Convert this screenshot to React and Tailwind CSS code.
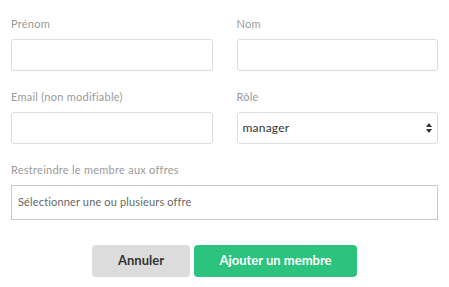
import React, { useState } from 'react';

const Field = ({ label, children }) => (
	<div className="flex flex-col">
		<label className="mb-[8px] text-[11px] leading-[14px] tracking-[0.25px] text-[#9a9a9a]">{label}</label>
		{children}
	</div>
);

const inputClass = 'h-[32px] w-full rounded-[3px] border border-[#dcdcdc] bg-white px-[10px] text-[12px] text-[#333] outline-none';

export default function App() {
	const [role, setRole] = useState('manager');

	return (
		<div className="min-h-screen bg-white px-[11px] pt-[17px]" style={{ fontFamily: 'Lato, "Open Sans", sans-serif' }}>
			<div className="grid grid-cols-2 gap-x-[24px] gap-y-[19px]">
				<Field label="Prénom">
					<input type="text" className={inputClass} />
				</Field>
				<Field label="Nom">
					<input type="text" className={inputClass} />
				</Field>
				<Field label="Email (non modifiable)">
					<input type="text" className={inputClass} />
				</Field>
				<Field label="Rôle">
					<div className="relative">
						<select
							value={role}
							onChange={(e) => setRole(e.target.value)}
							className={`${inputClass} appearance-none pl-[5px] tracking-[0.2px]`}
						>
							<option value="manager">manager</option>
							<option value="admin">admin</option>
						</select>
						<svg className="pointer-events-none absolute right-[6px] top-[11px]" width="6" height="10" viewBox="0 0 6 10">
							<path d="M3 0 L6 4 L0 4 Z" fill="#333" />
							<path d="M0 6 L6 6 L3 10 Z" fill="#333" />
						</svg>
					</div>
				</Field>
			</div>

			<div className="mt-[19px]">
				<Field label="Restreindre le membre aux offres">
					<div className="flex h-[35px] items-center border border-[#c9c9c9] px-[6px] text-[11px] tracking-[0.15px] text-[#666]">
						Sélectionner une ou plusieurs offre
					</div>
				</Field>
			</div>

			<div className="mt-[25px] flex justify-center gap-[4px]">
				<button className="h-[32px] w-[98px] rounded-[4px] bg-[#dcdcdc] text-[13px] font-bold text-[#333]">
					Annuler
				</button>
				<button className="h-[32px] w-[163px] rounded-[4px] bg-[#2bc37d] text-[13px] font-bold text-white">
					Ajouter un membre
				</button>
			</div>
		</div>
	);
}
